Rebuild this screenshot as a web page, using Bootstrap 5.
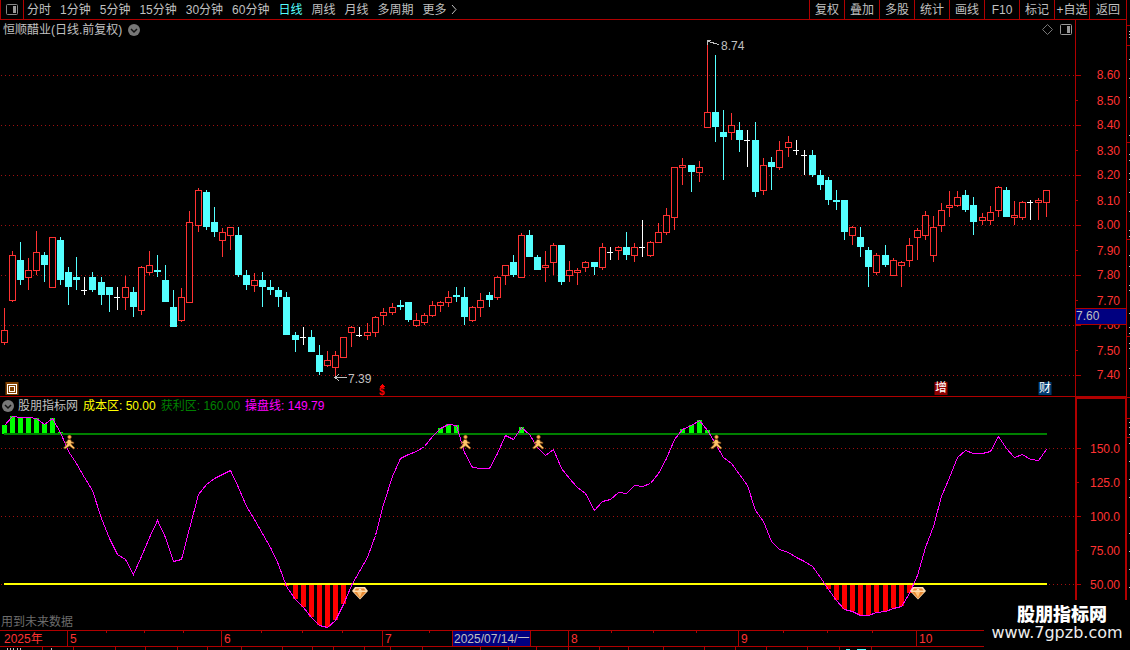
<!DOCTYPE html>
<html lang="zh-CN">
<head>
<meta charset="utf-8">
<meta name="viewport" content="width=device-width, initial-scale=1">
<title>恒顺醋业 日线</title>
<link href="https://cdn.jsdelivr.net/npm/bootstrap@5.3.0/dist/css/bootstrap.min.css" rel="stylesheet">
<style>
:root { --line: #b00000; --up: #ff3232; --down: #54ffff; --ink: #c0c0c0; }
body { background: #000; color: var(--ink); font: 12px/16px "Liberation Sans", "Noto Sans CJK SC", sans-serif; }
button { background: none; border: 0; padding: 0; color: inherit; font: inherit; white-space: nowrap; }
svg { display: block; }
.topbar { height: 20px; border-bottom: 1px solid var(--line); }
.layout-btn { width: 24px; border: solid var(--line); border-width: 0 1px; }
.periods { gap: 9px; padding-left: 3px; }
.periods .active { color: var(--down); }
.tools button { width: 35px; border-left: 1px solid var(--line); }
.tools button:last-child { width: 37px; }
.frame { border-right: 1px solid var(--line); }
.price-panel { height: 377px; border-bottom: 1px solid var(--line); }
.osc-panel { height: 233px; }
.plot { min-width: 0; }
.plot > svg, .timebar > svg { width: 100%; height: 100%; overflow: hidden; }
.price-axis { width: 51px; border-left: 1px solid var(--line); color: var(--up); padding-top: 43px; }
.price-axis ol { padding: 0 6px 0 0; }
.price-axis li { height: 25px; line-height: 25px; }
.price-axis li:nth-child(even) { line-height: 27px; }
.osc-axis { width: 52px; margin-right: -1px; border: 2px solid var(--line); border-bottom: 0; color: var(--up); padding-top: 33px; }
.osc-axis ol { padding: 0 5px 0 0; }
.osc-axis li { height: 34px; line-height: 34px; }
.tickmarks { left: 0; top: 0; width: 6px; height: 100%; }
.price-now { left: 0; right: 0; top: 288px; height: 17px; line-height: 15px; background: #000080; border: solid var(--line); border-width: 1px 0; color: var(--ink); }
.caption-row { left: 2px; top: 1px; height: 16px; gap: 5px; }
.stock-title { left: 3px; top: 2px; gap: 6px; }
.osc-legend > button { margin-right: -1px; }
.view-tools { right: 3px; top: 4px; gap: 7px; }
.hint { left: 1px; bottom: 0; color: #6c6c6c; }
.event-tag { width: 13px; height: 13px; line-height: 13px; color: #fff; text-align: center; top: 362px; transform: translateX(-50%); }
.timebar { height: 17px; border: solid var(--line); border-width: 1px 0; color: var(--up); }
.timebar span { top: 0; line-height: 16px; border-left: 1px solid var(--line); padding-left: 2px; height: 15px; white-space: nowrap; }
.timebar .cursor-date { background: #000080; color: var(--ink); border-right: 1px solid var(--line); padding: 0 1px; }
.footer-strip { height: 3px; }
.side-strip { width: 3px; }
.site-mark { right: 0; bottom: 0; width: 146px; height: 50px; background: #000; color: #fff; text-align: center; padding-top: 5px; }
.site-mark strong { display: block; padding-left: 10px; font-size: 18px; line-height: 20px; font-weight: 900; }
.site-mark a { display: block; font: 500 16px/16px "DejaVu Sans", sans-serif; color: #eee; text-decoration: none; }
</style>
</head>
<body>
<div class="d-flex position-relative">
  <div class="frame flex-fill plot">
    <header class="topbar d-flex">
      <button class="layout-btn d-flex align-items-center justify-content-center" aria-label="布局">
        <svg width="12" height="11"><rect x=".5" y=".5" width="11" height="10" rx="1" fill="none" stroke="#888"/><rect x="7" y="2" width="3" height="7" fill="#999"/></svg>
      </button>
      <nav class="periods d-flex" aria-label="周期">
        <button>分时</button><button>1分钟</button><button>5分钟</button><button>15分钟</button><button>30分钟</button><button>60分钟</button><button class="active">日线</button><button>周线</button><button>月线</button><button>多周期</button>
        <button class="d-flex align-items-center gap-1">更多<svg width="6" height="9"><path d="M1 0L5 4.500L1 9" fill="none" stroke="#c0c0c0"/></svg></button>
      </nav>
      <nav class="tools d-flex ms-auto" aria-label="工具">
        <button>复权</button><button>叠加</button><button>多股</button><button>统计</button><button>画线</button><button>F10</button><button>标记</button><button>+自选</button><button>返回</button>
      </nav>
    </header>

    <section class="price-panel d-flex">
      <div class="plot flex-fill position-relative">
        <svg id="price" shape-rendering="crispEdges"></svg>
        <div class="caption-row stock-title position-absolute d-flex align-items-center">
          <span>恒顺醋业(日线.前复权)</span>
          <button aria-label="菜单"><svg width="12" height="12"><circle cx="6" cy="6" r="6" fill="#777"/><path d="M3 5L6 8L9 5" fill="none" stroke="#111" stroke-width="1.500"/></svg></button>
        </div>
        <div class="view-tools position-absolute d-flex align-items-center">
          <svg width="11" height="11"><path d="M5.500 .5L10.500 5.500L5.500 10.500L.5 5.500Z" fill="none" stroke="#777"/></svg>
          <svg width="12" height="11"><rect x=".5" y=".5" width="11" height="10" rx="1" fill="none" stroke="#999"/><rect x="7" y="2" width="3" height="7" fill="#999"/></svg>
        </div>
        <div id="tags"></div>
      </div>
      <div class="price-axis position-relative">
        <svg class="tickmarks position-absolute" id="priceTicks" shape-rendering="crispEdges"></svg>
        <ol class="list-unstyled text-end mb-0"><li>8.60</li><li>8.50</li><li>8.40</li><li>8.30</li><li>8.20</li><li>8.10</li><li>8.00</li><li>7.90</li><li>7.80</li><li>7.70</li><li>7.60</li><li>7.50</li><li>7.40</li></ol>
        <div class="price-now position-absolute">7.60</div>
      </div>
    </section>

    <section class="osc-panel d-flex">
      <div class="plot flex-fill position-relative">
        <svg id="osc" shape-rendering="crispEdges"></svg>
        <div class="caption-row osc-legend position-absolute d-flex align-items-center">
          <button aria-label="指标菜单"><svg width="12" height="12"><circle cx="6" cy="6" r="6" fill="#777"/><path d="M3 5L6 8L9 5" fill="none" stroke="#111" stroke-width="1.500"/></svg></button>
          <span>股朋指标网</span>
          <span style="color:#ff0">成本区: 50.00</span><span style="color:#008000">获利区: 160.00</span><span style="color:#f0f">操盘线: 149.79</span>
        </div>
        <div class="hint position-absolute">用到未来数据</div>
      </div>
      <div class="osc-axis position-relative">
        <svg class="tickmarks position-absolute" id="oscTicks" shape-rendering="crispEdges"></svg>
        <ol class="list-unstyled text-end mb-0"><li>150.0</li><li>125.0</li><li>100.0</li><li>75.00</li><li>50.00</li></ol>
      </div>
    </section>

    <div class="timebar position-relative" id="timebar"></div>
    <div class="footer-strip"><svg id="foot" width="100%" height="3" shape-rendering="crispEdges"></svg></div>
  </div>
  <div class="side-strip"><svg id="side" width="3" height="650" shape-rendering="crispEdges"></svg></div>

  <aside class="site-mark position-absolute">
    <strong>股朋指标网</strong>
    <a href="#">www.7gpzb.com</a>
  </aside>
</div>
<script src="https://cdn.jsdelivr.net/npm/bootstrap@5.3.0/dist/js/bootstrap.bundle.min.js"></script>
<script>
// kind, wick top, body top, body bottom, wick bottom (r = up, c = down, w = unchanged)
const candles = `r308,330,343,345 r251,255,301,302 c242,260,280,285 r258,270,278,290 r231,252,271,275 c252,255,265,282 r237,237,288,288 c237,240,280,285 c267,272,287,305 c257,277,280,290
w277,290,291,295 c272,277,290,292 c277,282,295,305 c287,287,295,312 w287,297,298,310 r276,287,298,310 c287,292,307,317 r266,267,311,315 r251,265,273,275 c255,270,272,277
c265,280,302,302 c290,307,327,327 r288,297,321,322 r211,222,303,303 r188,190,226,232 c190,192,227,230 c207,222,232,237 r228,232,241,257 r227,227,236,250 c227,235,275,277
c270,275,285,290 r273,280,286,292 c272,280,287,307 c280,287,290,295 c287,290,297,307 c292,297,335,335 c332,335,340,352 w327,337,338,345 c330,337,352,352 c345,355,372,375
r351,360,366,367 r351,355,368,376 r337,337,358,358 r326,327,333,347 w327,335,336,337 r323,332,336,340 r316,317,333,337 r308,312,316,325 r303,307,313,315 c300,305,307,310
c302,302,320,322 r313,320,326,327 r313,315,323,325 r301,305,316,317 r301,302,306,312 r291,297,303,307 c287,295,297,302 c287,297,317,325 r306,307,321,322 r293,300,308,317
c292,295,300,307 r276,277,298,300 r265,265,276,285 c255,262,275,277 r233,235,278,278 c230,235,257,257 c255,257,270,270 r251,265,268,282 r243,245,263,275 c245,245,282,285
r261,270,276,282 r268,270,273,285 r261,262,268,272 c262,262,267,275 r243,247,268,270 w247,252,253,260 r246,247,251,260 c232,247,255,260 r243,247,256,262 w220,247,248,257
r241,242,256,257 r223,232,243,243 r208,215,233,235 r167,167,218,230 r158,165,168,185 c165,165,172,192 r161,167,173,182 r43,112,128,128 c55,112,127,142 c110,132,137,180
r113,125,133,140 c122,130,140,152 w130,140,141,167 c122,140,192,197 r158,165,191,195 c157,162,167,190 r141,150,168,170 r136,142,148,157 w140,150,151,155 w150,155,156,175
c150,155,175,177 c170,175,185,190 c177,180,200,205 c190,200,202,210 c200,200,232,240 r226,227,236,245 c227,237,247,257 c247,250,267,287 r253,255,273,275 c245,255,265,267
r258,260,276,276 r261,262,266,287 r238,245,261,267 r228,230,238,260 r211,215,236,240 r216,227,256,262 r203,210,226,232 r191,205,208,217 r191,197,206,207 c190,195,210,212
c197,205,222,235 r213,217,221,225 r206,212,221,225 r186,187,211,217 c187,190,217,217 r201,215,218,225 r201,202,218,220 w200,202,203,220 r198,200,203,220 r190,190,203,217`
  .split(/\s+/).map(s => [s[0], ...s.slice(1).split(',').map(Number)]);
const line = [425,416,417,417,418,424,418,432,451,463,477,490,518,538,554,559,574,556,537,520,537,561,559,528,494,484,478,474,470,487,506,519,533,547,564,586,599,607,617,625,627,620,604,585,571,557,535,504,476,458,454,451,446,436,428,424,425,452,467,468,468,453,435,439,427,434,447,455,449,468,478,487,493,510,501,499,492,493,485,486,483,473,458,439,429,425,420,430,443,457,463,474,485,510,521,541,549,552,557,561,566,577,589,600,609,611,615,615,612,611,608,606,593,575,547,526,496,477,457,450,453,453,451,436,448,457,454,459,460,449];
const months = [[0,'2025年'],[67,'5'],[221,'6'],[382,'7'],[568,'8'],[738,'9'],[916,'10']];
const minor = [106,144,183,261,302,342,429,611,653,696,783,827,872];
const footTicks = [42,73,115,145,177,207,241,282,312,333,364,390,422,480,508,536,568,599,628,663,704,735,766,807,839,871];
const colors = { r: '#ff3232', c: '#54ffff', w: '#fff' };
const $ = id => document.getElementById(id);
const rect = (x, y, w, h, c) => `<rect x="${x}" y="${y}" width="${w}" height="${h}" fill="${c}"/>`;
const dots = (y, W) => `<path d="M1 ${y + .5}H${W}" stroke="#a01010" stroke-dasharray="1 3"/>`;
const runner = x => `<g transform="translate(${x - 6} 38)" shape-rendering="auto" stroke="#7a4010" stroke-width=".7" stroke-linejoin="round">
  <path d="M5 4.500H7.500L8.500 6.500L11 7.500L10.700 8.600L8 8.200L9 10L12 13L10.500 14L6.500 11L2 14L.5 13L3.500 10L4.200 8L2.500 8.600L2.300 7.300L4 6.500Z" fill="#ffc468"/>
  <circle cx="6.500" cy="2" r="1.900" fill="#ffb050"/></g>`;
const gem = x => `<g transform="translate(${x - 8} 190)" shape-rendering="auto"><path d="M3 0H13L16 4L8 12.500L0 4Z" fill="#ffdcae"/><path d="M4 1.500H12L13.500 3.500H2.500Z" fill="#e88830"/><path d="M6 3.500L8 1.500L10 3.500Z" fill="#fff0d8"/><path d="M2 5H14L8 11.500Z" fill="#e88a34"/><path d="M5 5H10L8 10.500Z" fill="#ffc47c"/></g>`;

function draw() {
  const W = $('price').clientWidth, step = W / 133, k = W / 1075;
  const X = i => Math.floor(step * (i + .5));
  let s = '';
  for (let y = 55; y <= 355; y += 50) s += dots(y, W);
  candles.forEach(([kind, a, b, c, d], i) => {
    const x = X(i), col = colors[kind], t = -20;
    if (kind === 'r') {
      s += rect(x, a + t, 1, b - a, col) + rect(x, c + t, 1, d - c, col);
      s += `<rect x="${x - 2.5}" y="${b + t + .5}" width="6" height="${c - b - 1}" fill="#000" stroke="${col}"/>`;
    } else s += rect(x, a + t, 1, d - a, col) + rect(x - 3, b + t, kind === 'w' ? 6 : 7, c - b, col);
  });
  const hi = X(87), lo = X(41);
  s += `<g fill="none" stroke="#c0c0c0"><path d="M${hi} 25V20.500H${hi + 4}M${hi + 1} 21.500L${hi + 12} 24.500"/><path d="M${lo} 357.500H${lo + 12}M${lo + 4} 354L${lo} 357.500L${lo + 4} 361"/></g>
    <g fill="#c0c0c0" font-size="12"><text x="${hi + 14}" y="30">8.74</text><text x="${lo + 13}" y="363">7.39</text></g>`;
  const p = X(46) + 7;
  s += `<path d="M${p - 2.5} 366.500L${p} 364L${p + 2.5} 366.500Z" fill="#f00"/><text x="${p - 3}" y="375" font-size="10" font-weight="bold" fill="#f00">$</text>`;
  $('price').innerHTML = s;
  $('tags').innerHTML = `<span class="event-tag position-absolute" style="left:${Math.round(11.5 * k)}px;background:#804000"><svg width="13" height="13" fill="none" stroke="#fff" shape-rendering="crispEdges"><rect x="1.500" y="2.500" width="9" height="9"/><rect x="3.500" y="4.500" width="5" height="5"/></svg></span>
    <span class="event-tag position-absolute" style="left:${X(116)}px;background:#900000">增</span>
    <span class="event-tag position-absolute" style="left:${X(129) - 1}px;background:#003a70">财</span>`;

  const x0 = X(0), x1 = X(129) + 1;
  s = [51, 119, 187].map(y => dots(y, W)).join('');
  line.forEach((y, i) => {
    if (y < 433) s += rect(X(i) - 2, y - 397, 5, 434 - y, '#0f0');
    if (y > 584) s += rect(X(i) - 2, 187, 5, y - 584, '#f00');
  });
  s += rect(x0, 36, x1 - x0, 2, '#008000') + rect(x0, 186, x1 - x0, 2, '#ff0');
  s += `<polyline fill="none" stroke="#f0f" points="${line.map((y, i) => `${X(i) + .5},${y - 396.5}`).join(' ')}"/>`;
  [8, 57, 66, 88].forEach(i => s += runner(X(i) + 1));
  [44, 113].forEach(i => s += gem(X(i) + 1));
  $('osc').innerHTML = s;

  $('priceTicks').innerHTML = Array.from({ length: 13 }, (_, i) => rect(0, 55 + i * 25, i % 2 ? 2 : 5, 1, '#b00000')).join('');
  $('oscTicks').innerHTML = Array.from({ length: 5 }, (_, i) => rect(0, 49 + i * 34, i % 2 ? 2 : 4, 1, '#b00000')).join('');
  $('timebar').innerHTML = `<svg shape-rendering="crispEdges">${minor.map(x => rect(Math.round(x * k), 0, 1, 2, '#b00000')).join('')}</svg>`
    + months.map(([x, t]) => `<span class="position-absolute" style="left:${Math.round(x * k)}px${x ? '' : ';border:0;padding-left:4px'}">${t}</span>`).join('')
    + `<span class="cursor-date position-absolute" style="left:${Math.round(452 * k)}px">2025/07/14/一</span>`;
  $('foot').innerHTML = footTicks.map(x => rect(Math.round(x * k), 0, 1, 3, '#b00000')).join('')
    + [7, 10, 13, 17, 20, 51].map(x => rect(x, 1, 1, 2, '#c0c0c0')).join('') + rect(846, 2, 4, 1, '#54ffff') + rect(857, 2, 9, 1, '#54ffff');
  $('side').innerHTML = [25, 45, 142, 239, 336, 397, 418, 437].map(y => rect(0, y, 3, 1, '#b00000')).join('')
    + [31, 34, 37, 59, 78, 97, 135, 154, 160, 173, 179, 192, 211, 230, 236, 255, 266, 285, 290, 313, 327, 333, 343, 348, 368, 422, 427, 434, 443, 461, 479, 497, 533, 551, 569, 587].map(y => rect(2, y, 1, 1, '#c0c0c0')).join('');
}
draw();
addEventListener('resize', draw);
</script>
</body>
</html>
